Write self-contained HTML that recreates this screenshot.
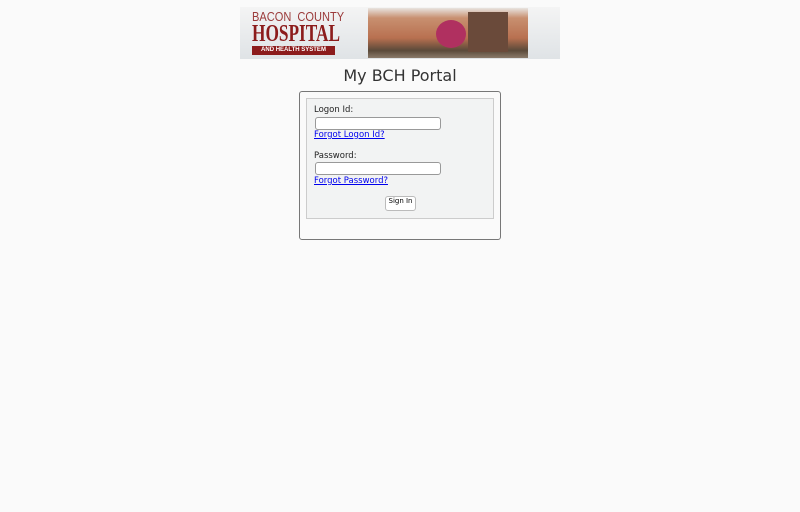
<!DOCTYPE html>
<html><head><style>
body{margin:0;background:#fafafa;font-family:"DejaVu Sans","Liberation Sans",sans-serif;width:800px;height:512px;position:relative;overflow:hidden}
.a{position:absolute}
</style></head><body>
<div class="a" style="left:240px;top:7px;width:320px;height:52px;background:linear-gradient(#f4f4f4,#dfe3e6)"></div>
<div class="a" style="left:252px;top:9px;font:13px 'Liberation Sans',sans-serif;color:#9b3a3a;transform:scaleX(.85);transform-origin:left">BACON&nbsp; COUNTY</div>
<div class="a" style="left:252px;top:21px;font:bold 24px 'Liberation Serif',serif;color:#8c1c1c;transform:scaleX(.72);transform-origin:left">HOSPITAL</div>
<div class="a" style="left:252px;top:46px;width:83px;height:9px;background:#8c1c1c;color:#fff;font:bold 6px sans-serif;text-align:center;line-height:9px">AND HEALTH SYSTEM</div>
<div class="a" style="left:368px;top:8px;width:160px;height:50px;background:linear-gradient(#e8e4e0 0,#c89070 20%,#b87050 60%,#5a4a3a 85%,#8a7a6a 100%)"></div>
<div class="a" style="left:468px;top:12px;width:40px;height:40px;background:#6a4a3a"></div>
<div class="a" style="left:436px;top:20px;width:30px;height:28px;border-radius:50%;background:#b03060"></div>
<div class="a" style="left:0;top:66px;width:800px;text-align:center;font-size:16px;color:#333">My BCH Portal</div>
<div class="a" style="left:299px;top:91px;width:200px;height:147px;border:1px solid #777;border-radius:3px;background:#fafafa"></div>
<div class="a" style="left:306px;top:98px;width:186px;height:119px;border:1px solid #ccc;background:#f2f3f3"></div>
<div class="a" style="left:314px;top:105px;font-size:8.5px;color:#222">Logon Id:</div>
<div class="a" style="left:315px;top:117px;width:124px;height:11px;border:1px solid #999;border-radius:3px;background:#fff"></div>
<div class="a" style="left:314px;top:130px;font-size:8.5px;color:#00e;text-decoration:underline">Forgot Logon Id?</div>
<div class="a" style="left:314px;top:151px;font-size:8.5px;color:#222">Password:</div>
<div class="a" style="left:315px;top:162px;width:124px;height:11px;border:1px solid #999;border-radius:3px;background:#fff"></div>
<div class="a" style="left:314px;top:176px;font-size:8.5px;color:#00e;text-decoration:underline">Forgot Password?</div>
<div class="a" style="left:385px;top:196px;width:29px;height:13px;border:1px solid #bbb;border-radius:3px;background:#fff;font-size:7px;text-align:center;line-height:9px">Sign In</div>
</body></html>
